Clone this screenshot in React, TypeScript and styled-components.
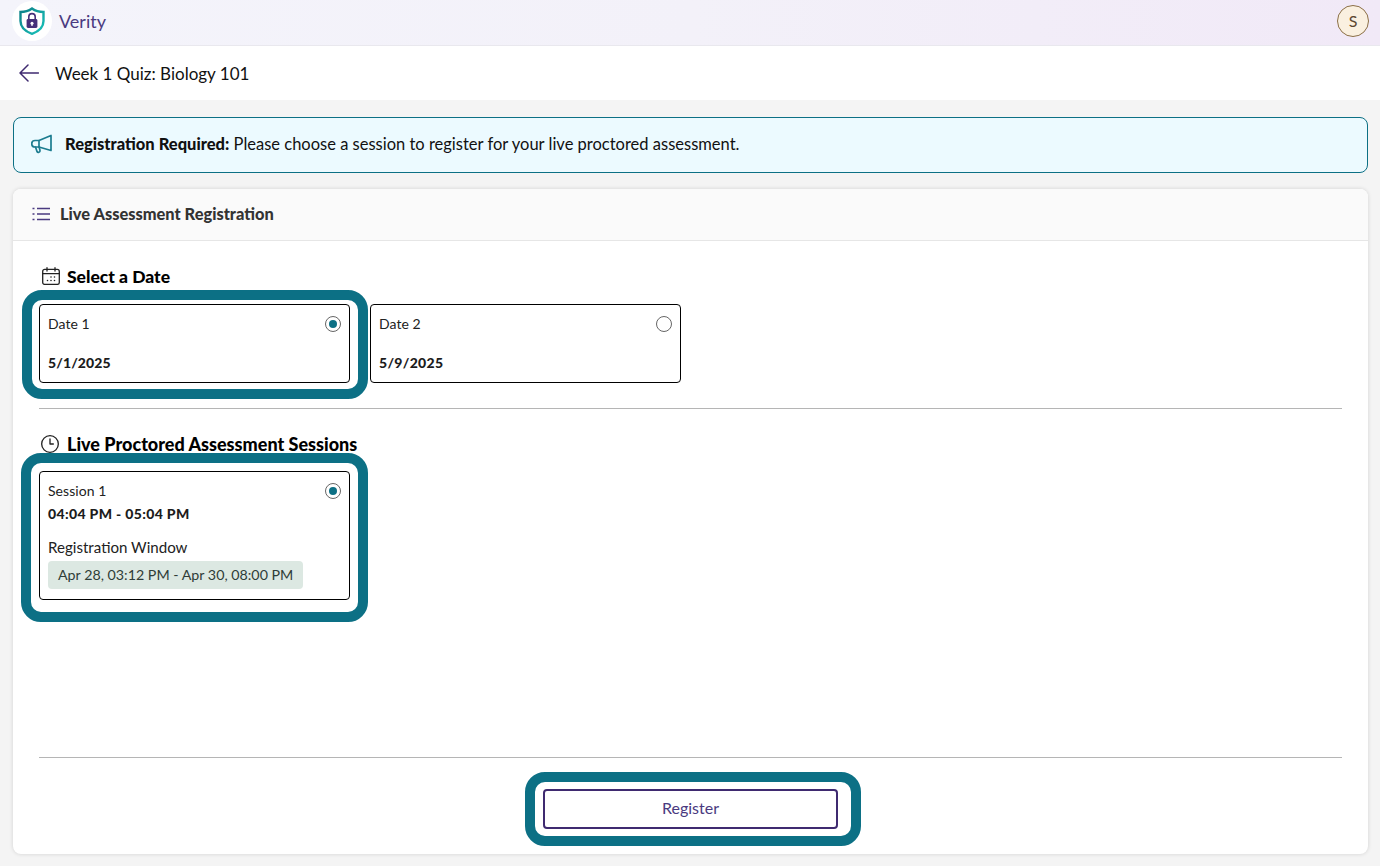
import React from "react";
import styled, { createGlobalStyle } from "styled-components";
import { Clock3 } from "lucide-react";

const Global = createGlobalStyle`
  html, body { margin: 0; padding: 0; background: #f4f4f4; }
  * { box-sizing: border-box; }
  body { font-family: "Lato", "Liberation Sans", sans-serif; color: #161616; }
`;

const Page = styled.div`
  width: 1380px; height: 866px; display: flex; flex-direction: column; overflow: hidden;
`;
const TopBar = styled.header`
  height: 46px; flex: none; display: flex; align-items: center; justify-content: space-between;
  padding: 0 11px 4px 12px;
  background: linear-gradient(90deg, #f4f4fb 0%, #f3f1f9 50%, #f1e9f7 100%);
  border-bottom: 1px solid #e9e8ee;
`;
const Brand = styled.div`display: flex; align-items: center; gap: 7px;`;
const LogoDisc = styled.div`
  width: 40px; height: 40px; border-radius: 50%; background: #fff;
  display: flex; align-items: center; justify-content: center;
`;
const BrandName = styled.span`font-size: 18px; color: #4a3a80;`;
const Avatar = styled.div`
  width: 32px; height: 32px; border-radius: 50%; background: #faf0e0; border: 1.5px solid #8b6f47;
  display: flex; align-items: center; justify-content: center; font-size: 16px; color: #5b4630;
`;
const TitleBar = styled.div`
  height: 54px; flex: none; background: #fff; display: flex; align-items: center; gap: 16px; padding: 0 0 0 19px;
  color: #3f2a70;
`;
const Title = styled.h1`margin: 0; font-size: 17px; font-weight: 400; color: #111;`;
const Content = styled.main`
  flex: 1; min-height: 0; display: flex; flex-direction: column; gap: 16px; padding: 17px 12px 12px 13px;
`;
const Banner = styled.div`
  height: 56px; flex: none; display: flex; align-items: center; gap: 13px; padding: 0 16px 3px 17px;
  background: #ecfaff; border: 1px solid #0c7085; border-radius: 8px; font-size: 16.5px; color: #111;
  svg { color: #1c7c90; flex: none; }
  strong { font-weight: 900; }
`;
const Card = styled.section`
  flex: 1; min-height: 0; display: flex; flex-direction: column; background: #fff; border-radius: 8px;
  box-shadow: 0 0 4px rgba(0,0,0,.14);
`;
const CardHeader = styled.div`
  height: 52px; flex: none; display: flex; align-items: center; gap: 10px; padding: 0 18px 2px 19px;
  background: #fafafa; border-bottom: 1px solid #e6e6e6; border-radius: 8px 8px 0 0;
  font-size: 16.4px; font-weight: 900; color: #333;
  svg { color: #4a3a80; flex: none; }
`;
const CardBody = styled.div`
  flex: 1; min-height: 0; display: flex; flex-direction: column; padding: 23px 26px 0;
`;
const SectionHeading = styled.h2<{ $size: number }>`
  margin: 0; height: 24px; display: flex; align-items: center;
  font-size: ${(p) => p.$size}px; font-weight: 900; color: #000;
`;
const IconSlot = styled.span<{ $inset: number }>`
  width: 28px; flex: none; display: flex; padding-left: ${(p) => p.$inset}px; color: #222;
`;
const Options = styled.div<{ $mt: number }>`display: flex; gap: 20px; margin-top: ${(p) => p.$mt}px;`;
const Ring = `
  content: ""; position: absolute; border: 10px solid #0c7085; border-radius: 20px; pointer-events: none;
`;
const Option = styled.div<{ $tall?: boolean; $focused?: boolean }>`
  position: relative; width: 311px; height: ${(p) => (p.$tall ? 129 : 79)}px;
  border: 1px solid #000; border-radius: 4px; background: #fff; padding: 10px 8px;
  display: flex; flex-direction: column;
  ${(p) => p.$focused && `&::after { ${Ring} inset: ${p.$tall ? "-19px -19px -23px -19px" : "-15px -19px -17px -18px"}; }`}
`;
const OptionTop = styled.div`display: flex; justify-content: space-between; align-items: flex-start; height: 18px;`;
const OptionLabel = styled.span`font-size: 14px; letter-spacing: .05px; line-height: 18px; color: #222;`;
const Radio = styled.span<{ $on?: boolean }>`
  width: 16px; height: 16px; margin-top: 1px; border-radius: 50%; border: 1px solid #666; background: #fff;
  display: flex; align-items: center; justify-content: center;
  &::after { content: ""; width: 8px; height: 8px; border-radius: 50%; background: ${(p) => (p.$on ? "#0c7085" : "transparent")}; }
`;
const StrongValue = styled.div<{ $gap: number; $track: number }>`
  margin-top: ${(p) => p.$gap}px; font-size: 14px; font-weight: 900; color: #1c1c1c;
  letter-spacing: ${(p) => p.$track}px; line-height: 18px;
`;
const WindowLabel = styled.div`margin-top: 15px; font-size: 15.1px; color: #222; line-height: 18px;`;
const WindowChip = styled.div`
  margin-top: 5px; align-self: flex-start; height: 28px; padding: 0 10px 2px; display: flex; align-items: center;
  background: #dce8e2; border-radius: 4px; font-size: 14.25px; color: #2f3d38;
`;
const Divider = styled.hr<{ $mt: number; $mb: number }>`
  margin: ${(p) => p.$mt}px 0 ${(p) => p.$mb}px; width: 100%; border: 0; border-top: 1px solid #b5b5b5; flex: none;
`;
const Spacer = styled.div`flex: 1;`;
const Footer = styled.div`display: flex; justify-content: center; height: 65px; flex: none;`;
const RegisterButton = styled.button`
  position: relative; width: 295px; height: 40px; background: #fff; border: 2px solid #3f2a70; border-radius: 4px;
  padding: 0 0 3px; font: inherit; font-size: 16px; color: #4a3a80;
  &::after { ${Ring} inset: -19px -25px -19px -20px; }
`;

const Logo = () => (
  <svg width="26" height="28" viewBox="0 0 26 28" aria-hidden>
    <defs>
      <linearGradient id="lg" x1="0" y1="0" x2="1" y2="1">
        <stop offset="0" stopColor="#0c7f86" />
        <stop offset="1" stopColor="#19c4bb" />
      </linearGradient>
    </defs>
    <path d="M13 1.5 C16.5 4 20.5 5 24.5 5 V14 C24.5 20 19.5 24.5 13 26.8 C6.5 24.5 1.5 20 1.5 14 V5 C5.5 5 9.5 4 13 1.5Z" fill="#fff" stroke="url(#lg)" strokeWidth="2.4" />
    <rect x="7.6" y="12" width="10.8" height="9" rx="1.4" fill="#46307a" />
    <path d="M9.8 12 V9.8 a3.2 3.2 0 0 1 6.4 0 V12" fill="none" stroke="#46307a" strokeWidth="1.6" />
    <circle cx="13" cy="16.2" r="1.5" fill="#fff" />
    <rect x="12.4" y="16.4" width="1.2" height="2.6" fill="#fff" />
  </svg>
);

const BackArrow = () => (
  <svg width="20" height="18" viewBox="0 0 20 18" fill="none" stroke="currentColor" strokeWidth="1.5" strokeLinecap="round" strokeLinejoin="round" aria-hidden>
    <path d="M19.5 9H1M9 1 1 9l8 8" />
  </svg>
);

const MegaphoneIcon = () => (
  <svg width="21" height="20" viewBox="0 0 21 20" fill="none" stroke="currentColor" strokeWidth="1.7" strokeLinejoin="round" strokeLinecap="round" aria-hidden>
    <path d="M20 1.5V16.5L8 13H4A3 3 0 0 1 4 6.5H8Z" />
    <path d="M8 6.5V13" />
    <path d="M4.5 13 6 17.5a1.6 1.6 0 0 0 3-1L8.2 13.2" />
  </svg>
);

const ListIcon = () => (
  <svg width="18" height="14" viewBox="0 0 18 14" fill="none" stroke="currentColor" strokeWidth="1.5" aria-hidden>
    <path d="M5 1.5H18M5 7H18M5 12.5H18" />
    <path d="M0.5 1.5H2.5M0.5 7H2.5M0.5 12.5H2.5" />
  </svg>
);

const CalendarIcon = () => (
  <svg width="18" height="18" viewBox="0 0 18 18" fill="none" stroke="currentColor" strokeWidth="1.3" strokeLinecap="round" aria-hidden>
    <rect x="0.7" y="2.4" width="16.6" height="15" rx="2" />
    <path d="M0.7 6.6H17.3M5 0.7V4M13 0.7V4" />
    <path d="M9 10H9.01M12.5 10H12.51M5.5 13.5H5.51M9 13.5H9.01M12.5 13.5H12.51" strokeWidth="1.6" />
  </svg>
);

export default function App() {
  return (
    <Page>
      <Global />
      <TopBar>
        <Brand>
          <LogoDisc><Logo /></LogoDisc>
          <BrandName>Verity</BrandName>
        </Brand>
        <Avatar>S</Avatar>
      </TopBar>
      <TitleBar>
        <BackArrow />
        <Title>Week 1 Quiz: Biology 101</Title>
      </TitleBar>
      <Content>
        <Banner>
          <MegaphoneIcon />
          <span><strong>Registration Required:</strong> Please choose a session to register for your live proctored assessment.</span>
        </Banner>
        <Card>
          <CardHeader>
            <ListIcon />
            Live Assessment Registration
          </CardHeader>
          <CardBody>
            <SectionHeading $size={17.5}><IconSlot $inset={3}><CalendarIcon /></IconSlot>Select a Date</SectionHeading>
            <Options $mt={16}>
              <Option $focused>
                <OptionTop><OptionLabel>Date 1</OptionLabel><Radio $on /></OptionTop>
                <StrongValue $gap={21} $track={0.1}>5/1/2025</StrongValue>
              </Option>
              <Option>
                <OptionTop><OptionLabel>Date 2</OptionLabel><Radio /></OptionTop>
                <StrongValue $gap={21} $track={0.3}>5/9/2025</StrongValue>
              </Option>
            </Options>
            <Divider $mt={25} $mb={23} />
            <SectionHeading $size={18}><IconSlot $inset={1}><Clock3 size={20} strokeWidth={1.6} /></IconSlot>Live Proctored Assessment Sessions</SectionHeading>
            <Options $mt={15}>
              <Option $tall $focused>
                <OptionTop><OptionLabel>Session 1</OptionLabel><Radio $on /></OptionTop>
                <StrongValue $gap={5} $track={0.35}>04:04 PM - 05:04 PM</StrongValue>
                <WindowLabel>Registration Window</WindowLabel>
                <WindowChip>Apr 28, 03:12 PM - Apr 30, 08:00 PM</WindowChip>
              </Option>
            </Options>
            <Spacer />
            <Divider $mt={0} $mb={31} />
            <Footer><RegisterButton>Register</RegisterButton></Footer>
          </CardBody>
        </Card>
      </Content>
    </Page>
  );
}
